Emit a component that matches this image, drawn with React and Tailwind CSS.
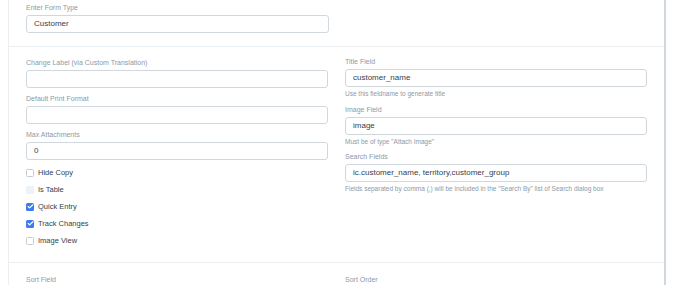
import { Check } from 'lucide-react';

const font = { fontFamily: '"Liberation Sans", Arial, sans-serif' };

function Label({ children }) {
  return <div className="text-[7px] leading-[12px] text-[#8d99a6]">{children}</div>;
}

function Input({ value }) {
  return (
    <div className="h-[18px] border border-[#d1d8dd] rounded-[3px] bg-white px-[7px] flex items-center text-[8px] text-[#36414c]">
      {value}
    </div>
  );
}

function Help({ children }) {
  return <div className="text-[6.5px] leading-[12px] text-[#8d99a6] mt-[1px]">{children}</div>;
}

function Field({ label, value, help, className = '' }) {
  return (
    <div className={className}>
      <Label>{label}</Label>
      <div className="mt-[1px]">
        <Input value={value} />
      </div>
      {help && <Help>{help}</Help>}
    </div>
  );
}

function CheckRow({ label, checked, disabled }) {
  return (
    <div className="h-[17px] flex items-center gap-[4px]">
      {checked ? (
        <span className="w-[8px] h-[8px] rounded-[1.5px] bg-[#3e7bef] flex items-center justify-center">
          <Check size={7} strokeWidth={4} className="text-white" />
        </span>
      ) : disabled ? (
        <span className="w-[8px] h-[8px] rounded-[1px] bg-[#eef1f5]" />
      ) : (
        <span className="w-[8px] h-[8px] rounded-[1.5px] border border-[#c4ccd3] bg-white" />
      )}
      <span className="text-[7.5px] text-[#36414c]">{label}</span>
    </div>
  );
}

export default function App() {
  return (
    <div className="w-[690px] h-[285px] bg-white overflow-hidden" style={font}>
      <div className="ml-[8px] w-[658px] h-full border-l border-[#ebeff2] border-r-2 border-r-[#d1d8dd]">
        {/* Form type */}
        <div className="px-[17px] pt-[2px] pb-[13px] border-b border-[#ebeff2]">
          <div className="w-[303px]">
            <Field label="Enter Form Type" value="Customer" />
          </div>
        </div>

        {/* Main properties */}
        <div className="px-[17px] pt-[10px] pb-[13px] border-b border-[#ebeff2] grid grid-cols-2 gap-x-[17px]">
          <div>
            <Field label="Change Label (via Custom Translation)" value="" />
            <Field label="Default Print Format" value="" className="mt-[5px]" />
            <Field label="Max Attachments" value="0" className="mt-[5px]" />
            <div className="mt-[4px]">
              <CheckRow label="Hide Copy" />
              <CheckRow label="Is Table" disabled />
              <CheckRow label="Quick Entry" checked />
              <CheckRow label="Track Changes" checked />
              <CheckRow label="Image View" />
            </div>
          </div>
          <div className="-mt-[1px]">
            <Field
              label="Title Field"
              value="customer_name"
              help="Use this fieldname to generate title"
            />
            <Field
              label="Image Field"
              value="image"
              help='Must be of type "Attach Image"'
              className="mt-[4px]"
            />
            <Field
              label="Search Fields"
              value="ic.customer_name, territory,customer_group"
              help='Fields separated by comma (,) will be included in the "Search By" list of Search dialog box'
              className="mt-[3px]"
            />
          </div>
        </div>

        {/* Sort */}
        <div className="px-[17px] pt-[11px] grid grid-cols-2 gap-x-[17px]">
          <Field label="Sort Field" value="" />
          <Field label="Sort Order" value="" />
        </div>
      </div>
    </div>
  );
}
